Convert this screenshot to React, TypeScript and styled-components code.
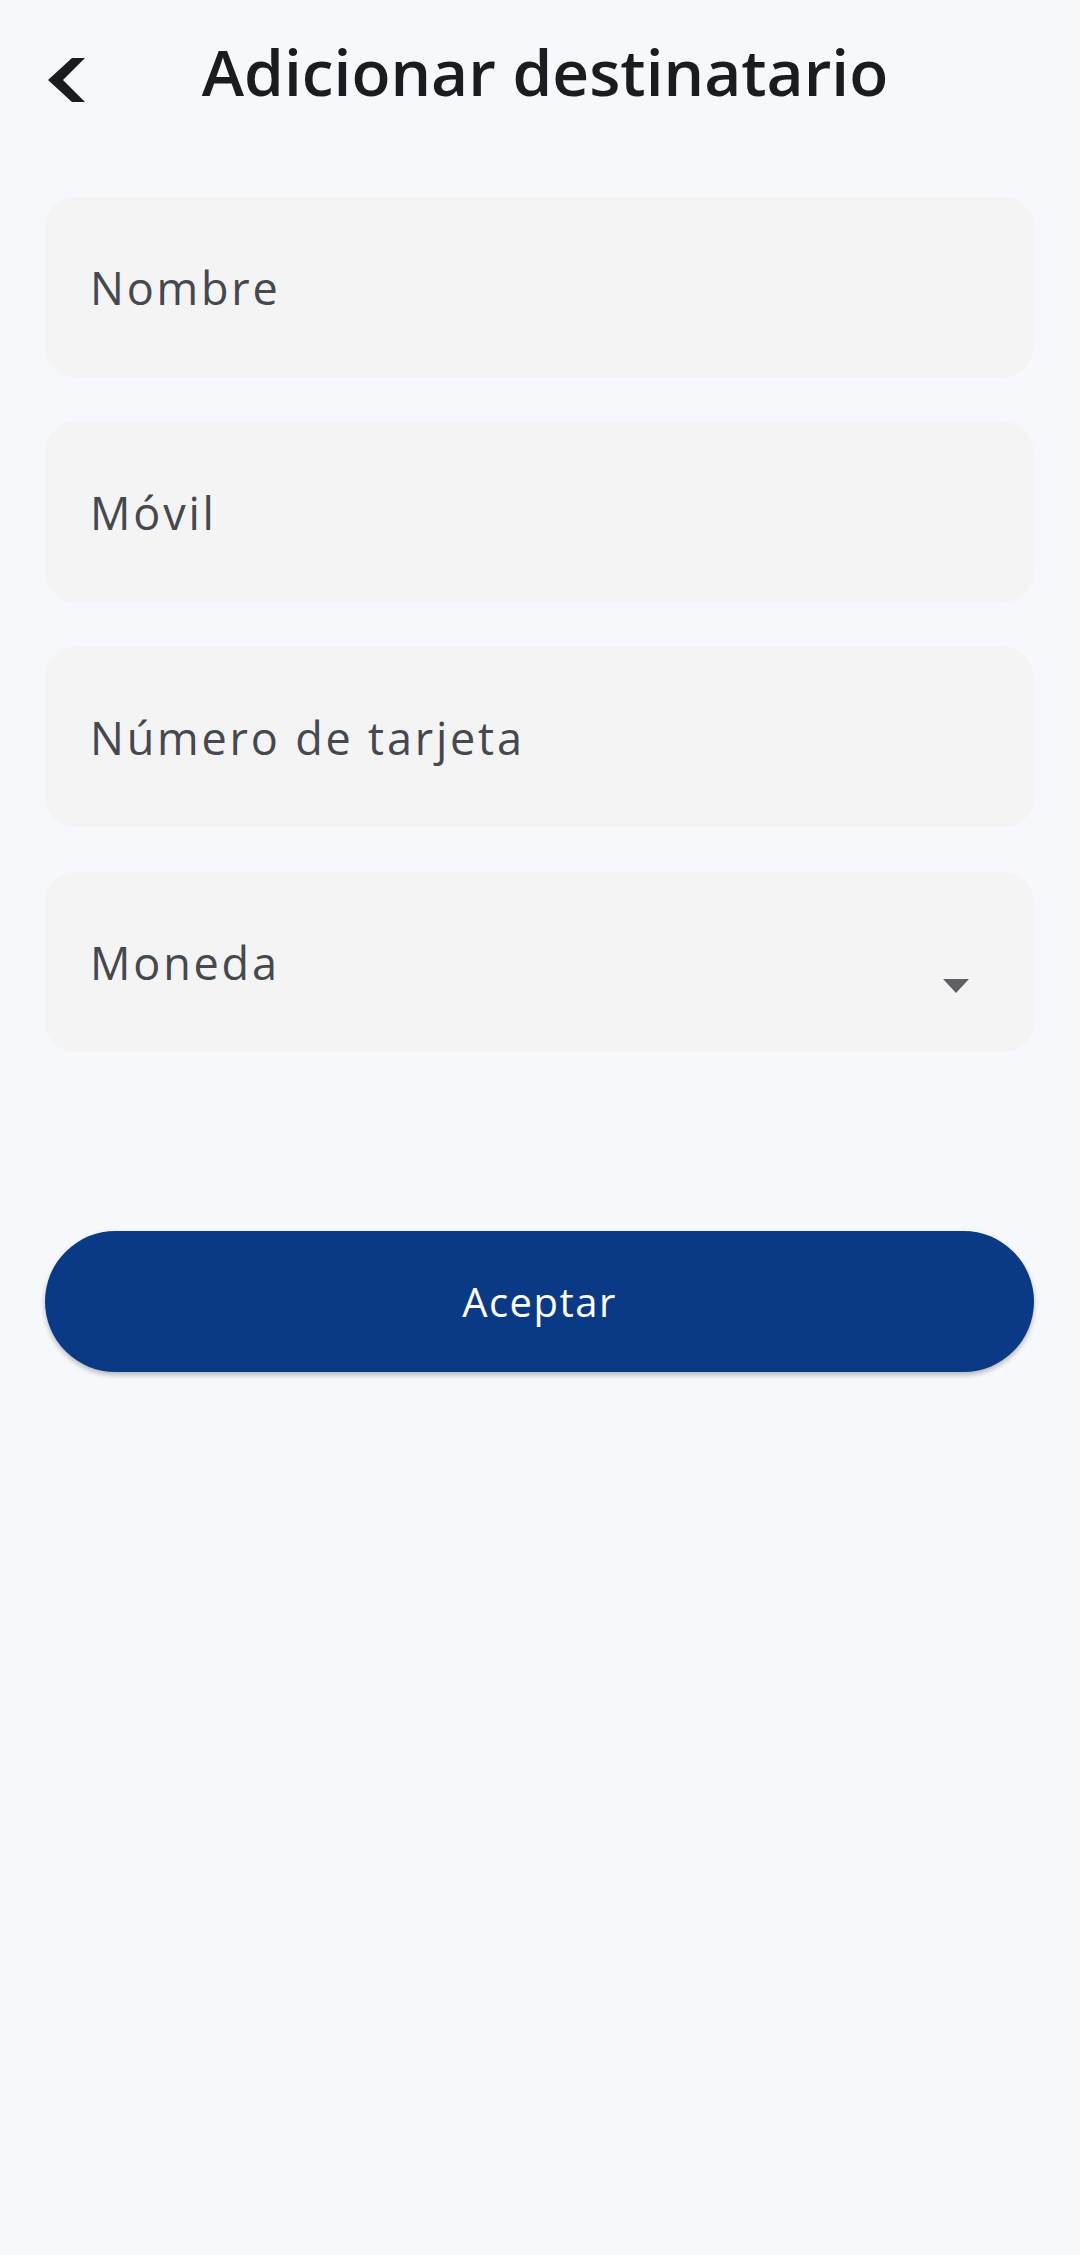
import React from "react";
import styled, { createGlobalStyle } from "styled-components";

const GlobalStyle = createGlobalStyle`
  html, body {
    margin: 0;
    padding: 0;
    background: #f7f8fc;
  }
  body {
    font-family: "Open Sans", "Noto Sans", sans-serif;
  }
`;

const Page = styled.div`
  width: 1080px;
  min-height: 2255px;
  background: #f7f8fc;
  display: flex;
  flex-direction: column;
`;

const Header = styled.header`
  height: 150px;
  display: flex;
  align-items: center;
`;

const BackButton = styled.button`
  width: 130px;
  height: 100%;
  border: none;
  background: transparent;
  padding: 10px 0 0 48px;
  display: flex;
  align-items: center;
  cursor: pointer;
`;

const Title = styled.h1`
  flex: 1;
  margin: 0 120px 0 0;
  padding-bottom: 6px;
  text-align: center;
  font-family: "Open Sans", "Noto Sans", sans-serif;
  font-weight: 600;
  font-size: 64px;
  line-height: 64px;
  color: #1b1c20;
  letter-spacing: 0;
`;

const Form = styled.form`
  margin: 47px 46px 0 45px;
  display: flex;
  flex-direction: column;
  gap: 45px;
`;

const Field = styled.div`
  height: 180px;
  border-radius: 30px;
  background: #f4f4f5;
  display: flex;
  align-items: center;
  padding-left: 45px;
`;

const Label = styled.span`
  flex: 1;
  font-family: "Open Sans", "Noto Sans", sans-serif;
  font-size: 45px;
  line-height: 45px;
  font-weight: 400;
  color: #45484e;
  letter-spacing: 2.8px;
`;

const Caret = styled.span`
  width: 0;
  height: 0;
  border-left: 13px solid transparent;
  border-right: 13px solid transparent;
  border-top: 14px solid #5f6064;
  margin: 48px 65px 0 0;
`;

const SubmitButton = styled.button`
  margin: 179px 46px 0 45px;
  height: 141px;
  border: none;
  border-radius: 71px;
  background: #0a3a85;
  box-shadow: 0 3px 5px rgba(0, 0, 0, 0.25);
  color: #ffffff;
  font-family: "Open Sans", "Noto Sans", sans-serif;
  font-size: 40px;
  font-weight: 400;
  letter-spacing: 1.5px;
  cursor: pointer;
`;

const BackIcon = () => (
  <svg width="37" height="44" viewBox="0 0 37 44">
    <polygon points="0,22 24,0 37,0 15,22 37,44 24,44" fill="#1b1c20" />
  </svg>
);

const fields = [
  { label: "Nombre" },
  { label: "Móvil" },
  { label: "Número de tarjeta" },
  { label: "Moneda", dropdown: true },
];

export default function App() {
  return (
    <>
      <GlobalStyle />
      <Page>
        <Header>
          <BackButton aria-label="Volver">
            <BackIcon />
          </BackButton>
          <Title>Adicionar destinatario</Title>
        </Header>
        <Form onSubmit={(e) => e.preventDefault()}>
          {fields.map((f) => (
            <Field key={f.label}>
              <Label>{f.label}</Label>
              {f.dropdown && <Caret />}
            </Field>
          ))}
        </Form>
        <SubmitButton type="button">Aceptar</SubmitButton>
      </Page>
    </>
  );
}
